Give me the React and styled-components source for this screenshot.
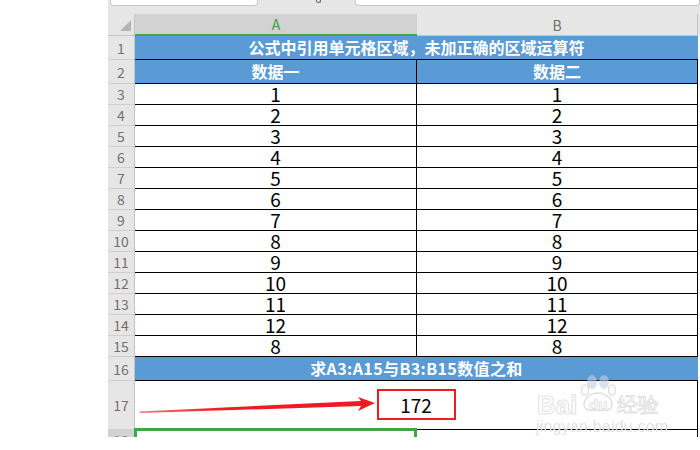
import React from 'react'
import styled, { createGlobalStyle } from 'styled-components'

const GlobalStyle = createGlobalStyle`
  html, body {
    margin: 0;
    background: #fff;
  }
`

const cjk = `"Noto Sans CJK SC", "Noto Sans", sans-serif`

const Page = styled.div`
  position: relative;
  width: 700px;
  height: 450px;
  overflow: hidden;
  background: #fff;
  font-family: ${cjk};
`

const Sheet = styled.div`
  margin-left: 108px;
  width: 592px;
  height: 437px;
  overflow: hidden;
`

const TopBar = styled.div`
  display: flex;
  height: 14px;
  background: #e6e6e6;
`

const InputBox = styled.div`
  box-sizing: border-box;
  height: 6px;
  margin-left: ${(p) => p.$left}px;
  width: ${(p) => p.$width}px;
  background: #fff;
  border: 1px solid #c8c8c8;
  border-top: 0;
  border-radius: 0 0 4px 4px;
`

const FxDot = styled.span`
  box-sizing: border-box;
  width: 5px;
  height: 3px;
  margin-left: 58px;
  border: 1px solid #666;
  border-top: 0;
  border-radius: 0 0 3px 3px;
`

const Grid = styled.div`
  display: grid;
  grid-template-columns: 27px 282px 281px 2px;
  grid-auto-rows: auto;
`

const Corner = styled.div`
  box-sizing: border-box;
  height: 22px;
  background: #e6e6e6;
  border-bottom: 1px solid #c4c4c4;
  border-right: 1px solid #c4c4c4;
  display: flex;
  align-items: flex-end;
  justify-content: flex-end;
  padding: 0 3px 4px 0;
`

const Triangle = styled.div`
  width: 0;
  height: 0;
  border-left: 11px solid transparent;
  border-bottom: 11px solid #b4b4b4;
`

const ColumnHead = styled.div`
  box-sizing: border-box;
  height: 22px;
  display: flex;
  align-items: center;
  justify-content: center;
  font-size: 14px;
  color: ${(p) => (p.$active ? '#3f9a4c' : '#6f6f6f')};
  background: ${(p) => (p.$active ? '#d2d2d2' : '#e6e6e6')};
  border-bottom: ${(p) => (p.$active ? '2px solid #3fa648' : '1px solid #c4c4c4')};
  border-right: ${(p) => (p.$active ? '0' : '1px solid #c4c4c4')};
`

const HeadEnd = styled.div`
  height: 22px;
  background: #e6e6e6;
`

const Gutter = styled.div`
  background: #fff;
`

const RowHead = styled.div`
  box-sizing: border-box;
  height: ${(p) => p.$height || 21}px;
  display: flex;
  align-items: ${(p) => (p.$active ? 'flex-start' : 'center')};
  justify-content: center;
  font-size: 14px;
  line-height: ${(p) => (p.$active ? '16px' : 'normal')};
  padding-top: ${(p) => (p.$active ? '2px' : '0')};
  color: ${(p) => (p.$active ? '#5f9f6a' : '#75706c')};
  background: ${(p) => (p.$active ? '#d2d2d2' : '#e6e6e6')};
  border-right: 1px solid #c4c4c4;
  border-bottom: 1px solid #d0d0d0;
`

const Cell = styled.div`
  box-sizing: border-box;
  height: ${(p) => p.$height || 21}px;
  display: flex;
  align-items: center;
  justify-content: center;
  padding-bottom: 2px;
  grid-column: ${(p) => (p.$span ? 'span 2' : 'auto')};
  font-size: 19px;
  line-height: 1;
  color: #000;
  background: #fff;
  border-right: 1px solid #000;
  border-bottom: 1px solid #000;
`

const BlueCell = styled(Cell)`
  background: #5b9bd5;
  color: #fff;
  font-size: 16px;
  font-weight: 700;
  letter-spacing: ${(p) => p.$spacing || 0}px;
  border-right: ${(p) => (p.$span ? '0' : '1px solid #000')};
`

const ResultCell = styled(Cell)`
  padding-bottom: 0;
`

const ResultBox = styled.div`
  box-sizing: border-box;
  width: 79px;
  height: 31px;
  margin-top: -1px;
  padding-bottom: 1px;
  display: flex;
  align-items: center;
  justify-content: center;
  border: 2px solid #ed1c24;
  background: #fff;
`

const SelectedCell = styled.div`
  box-sizing: border-box;
  height: 21px;
  margin: -2px 0 0 -1px;
  width: 283px;
  border: 3px solid #3fa648;
  background: #fff;
`

const EmptyCell = styled.div`
  height: 21px;
  background: #fff;
  border-right: 1px solid #000;
`

const Arrow = styled.svg`
  position: absolute;
  left: 135px;
  top: 390px;
`

const Watermark = styled.div`
  position: absolute;
  left: 535px;
  top: 374px;
  width: 130px;
  height: 64px;
  color: rgba(255, 255, 255, 0.8);
  font-family: "Liberation Sans", sans-serif;
  filter: blur(0.4px);
`

const Paw = styled.svg`
  position: absolute;
  left: 42px;
  top: 0;
`

const MarkWord = styled.span`
  position: absolute;
  left: ${(p) => p.$left}px;
  top: ${(p) => p.$top}px;
  font-size: ${(p) => p.$size}px;
  font-weight: ${(p) => p.$weight || 700};
  line-height: 1;
  white-space: nowrap;
  -webkit-text-stroke: 1px #e2e2e2;
`

const MarkUrl = styled.span`
  position: absolute;
  left: 1px;
  top: 45px;
  font-size: 16px;
  line-height: 1;
  color: #e2e2e2;
  white-space: nowrap;
  letter-spacing: 0.2px;
`

const rows = [
  [3, 1], [4, 2], [5, 3], [6, 4], [7, 5], [8, 6], [9, 7],
  [10, 8], [11, 9], [12, 10], [13, 11], [14, 12], [15, 8],
]

export default function App() {
  return (
    <Page>
      <GlobalStyle />
      <Sheet>
        <TopBar>
          <InputBox $left={2} $width={148} />
          <FxDot />
          <InputBox $left={34} $width={345} />
        </TopBar>
        <Grid>
          <Corner><Triangle /></Corner>
          <ColumnHead $active>A</ColumnHead>
          <ColumnHead>B</ColumnHead>
          <HeadEnd />

          <RowHead $height={24}>1</RowHead>
          <BlueCell $span $height={24}>公式中引用单元格区域，未加正确的区域运算符</BlueCell>
          <Gutter />
          <RowHead $height={24}>2</RowHead>
          <BlueCell $height={24}>数据一</BlueCell>
          <BlueCell $height={24}>数据二</BlueCell>
          <Gutter />

          {rows.map(([row, value]) => (
            <React.Fragment key={row}>
              <RowHead>{row}</RowHead>
              <Cell>{value}</Cell>
              <Cell>{value}</Cell>
              <Gutter />
            </React.Fragment>
          ))}

          <RowHead $height={24}>16</RowHead>
          <BlueCell $span $spacing={0.4} $height={24}>求A3:A15与B3:B15数值之和</BlueCell>
          <Gutter />
          <RowHead $height={49}>17</RowHead>
          <ResultCell $span $height={49}>
            <ResultBox>172</ResultBox>
          </ResultCell>
          <Gutter />
          <RowHead $active>18</RowHead>
          <SelectedCell />
          <EmptyCell />
          <Gutter />
        </Grid>
      </Sheet>

      <Arrow width="245" height="30" viewBox="0 0 245 30">
        <defs>
          <linearGradient id="arrowFade" x1="0" x2="1" y1="0" y2="0">
            <stop offset="0" stopColor="#f4747a" />
            <stop offset="0.35" stopColor="#ed1c24" />
          </linearGradient>
        </defs>
        <polygon
          points="5,21.5 226,11 223,7 240,13 223,21 226,16 5,23"
          fill="url(#arrowFade)"
        />
      </Arrow>

      <Watermark>
        <MarkWord $left={2} $top={18} $size={26}>Bai</MarkWord>
        <Paw width="50" height="44" viewBox="0 0 50 44">
          <g fill="rgba(190,205,225,0.6)">
            <ellipse cx="15" cy="8" rx="5" ry="7" />
            <ellipse cx="27" cy="8" rx="5" ry="7" />
          </g>
          <g fill="rgba(255,255,255,0.6)" stroke="#e0e0e0" strokeWidth="1.5">
            <ellipse cx="8" cy="16" rx="3.5" ry="5" />
            <ellipse cx="35" cy="16" rx="3.5" ry="5" />
            <path d="M21 19 C29 19 35 25 35 30 C35 37 28 37 21 36 C14 37 7 37 7 30 C7 25 13 19 21 19 Z" />
          </g>
        </Paw>
        <MarkWord $left={54} $top={23} $size={15}>du</MarkWord>
        <MarkWord $left={82} $top={20} $size={21} $weight={400}>经验</MarkWord>
        <MarkUrl>jingyan.baidu.com</MarkUrl>
      </Watermark>
    </Page>
  )
}
